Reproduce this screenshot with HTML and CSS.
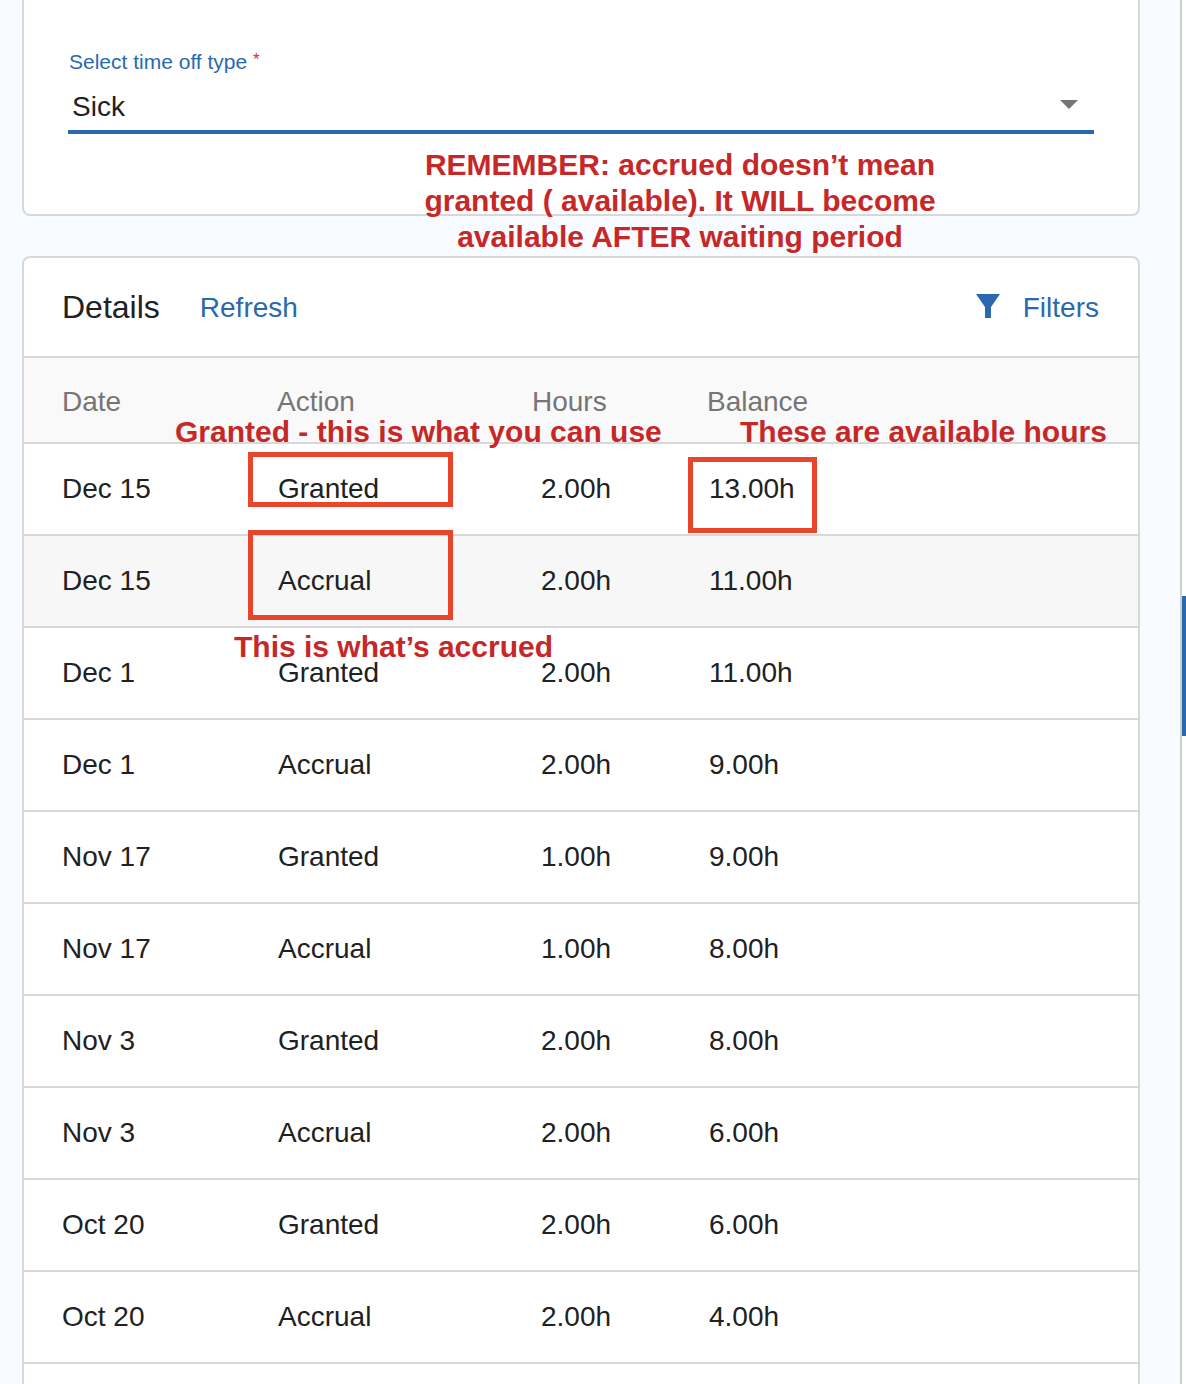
FILE: index.html
```html
<!DOCTYPE html>
<html lang="en">
<head>
    <meta charset="UTF-8">
    <title>Time off details</title>
    <link rel="stylesheet" href="styles.css">
</head>
<body>
    <div class="page">
        <div class="content">
            <div class="card type-card">
                <div class="field-label">Select time off type <span class="required">*</span></div>
                <div class="select">
                    <span>Sick</span>
                    <span class="select-arrow"></span>
                </div>
            </div>

            <div class="card details-card">
                <div class="details-header">
                    <h2 class="details-title">Details</h2>
                    <a class="link">Refresh</a>
                    <a class="link filters">
                        <svg class="filter-icon" width="24" height="24" viewBox="0 0 24 24"><path d="M0 0H24L15 13V24H9V13Z" fill="#2b69ae"/></svg>
                        Filters
                    </a>
                </div>

                <div class="row head">
                    <div>Date</div>
                    <div>Action</div>
                    <div>Hours</div>
                    <div>Balance</div>
                </div>
                <div class="row"><div>Dec 15</div><div class="action">Granted</div><div class="hours">2.00h</div><div class="balance">13.00h</div></div>
                <div class="row shaded"><div>Dec 15</div><div class="action">Accrual</div><div class="hours">2.00h</div><div class="balance">11.00h</div></div>
                <div class="row"><div>Dec 1</div><div class="action">Granted</div><div class="hours">2.00h</div><div class="balance">11.00h</div></div>
                <div class="row"><div>Dec 1</div><div class="action">Accrual</div><div class="hours">2.00h</div><div class="balance">9.00h</div></div>
                <div class="row"><div>Nov 17</div><div class="action">Granted</div><div class="hours">1.00h</div><div class="balance">9.00h</div></div>
                <div class="row"><div>Nov 17</div><div class="action">Accrual</div><div class="hours">1.00h</div><div class="balance">8.00h</div></div>
                <div class="row"><div>Nov 3</div><div class="action">Granted</div><div class="hours">2.00h</div><div class="balance">8.00h</div></div>
                <div class="row"><div>Nov 3</div><div class="action">Accrual</div><div class="hours">2.00h</div><div class="balance">6.00h</div></div>
                <div class="row"><div>Oct 20</div><div class="action">Granted</div><div class="hours">2.00h</div><div class="balance">6.00h</div></div>
                <div class="row"><div>Oct 20</div><div class="action">Accrual</div><div class="hours">2.00h</div><div class="balance">4.00h</div></div>
                <div class="row"></div>
            </div>
        </div>

        <div class="scrollbar"><div class="scrollbar-thumb"></div></div>

        <!-- annotations drawn on top of the screenshot -->
        <div class="note note-remember">REMEMBER: accrued doesn’t mean<br>granted ( available). It WILL become<br>available AFTER waiting period</div>
        <div class="note note-granted">Granted - this is what you can use</div>
        <div class="note note-hours">These are available hours</div>
        <div class="note note-accrued">This is what’s accrued</div>
        <div class="mark mark-granted"></div>
        <div class="mark mark-accrual"></div>
        <div class="mark mark-balance"></div>
    </div>
</body>
</html>
```

FILE: styles.css
```css
* {
    margin: 0;
    padding: 0;
    box-sizing: border-box;
}

body {
    font-family: "Liberation Sans", Arial, sans-serif;
    background: #f8fbff;
    color: #212121;
    overflow: hidden;
}

.page {
    position: relative;
    display: flex;
    height: 1384px;
    overflow: hidden;
}

.content {
    width: 1182px;
    padding: 0 40px 0 22px;
    border-right: 2px solid #cfcfcf;
}

.card {
    background: #fff;
    border: 2px solid #d8d8d8;
    border-radius: 8px;
}

.type-card {
    height: 216px;
    border-top: none;
    border-radius: 0 0 8px 8px;
    padding: 50px 44px 0;
    margin-bottom: 40px;
}

.field-label {
    font-size: 21px;
    line-height: 24px;
    padding-left: 1px;
    color: #2b69ae;
}

.required {
    color: #d9342b;
    font-size: 17px;
    line-height: 0;
    vertical-align: 4px;
}

.select {
    display: flex;
    justify-content: space-between;
    align-items: center;
    height: 60px;
    padding: 10px 16px 0 4px;
    font-size: 28px;
    border-bottom: 4px solid #2b69ae;
}

.select-arrow {
    width: 0;
    height: 0;
    margin-bottom: 5px;
    border-left: 9px solid transparent;
    border-right: 9px solid transparent;
    border-top: 9px solid #757575;
}

.details-header {
    display: flex;
    align-items: center;
    height: 98px;
    padding: 0 39px 0 38px;
}

.details-title {
    font-size: 32px;
    font-weight: normal;
    margin-right: 40px;
}

.link {
    font-size: 28px;
    padding-top: 2px;
    color: #2b69ae;
}

.filters {
    display: flex;
    align-items: center;
    margin-left: auto;
}

.filter-icon {
    margin-right: 23px;
    margin-bottom: 4px;
}

.row {
    display: grid;
    grid-template-columns: 215px 255px 175px 1fr;
    align-items: center;
    height: 92px;
    padding-left: 38px;
    font-size: 28px;
    border-top: 2px solid #d8d8d8;
}

.row.head {
    height: 86px;
    padding-top: 4px;
    background: #f9f9f9;
    color: #757575;
}

.row.shaded {
    background: #f7f7f7;
}

.action {
    padding-left: 1px;
}

.hours {
    padding-left: 9px;
}

.balance {
    padding-left: 2px;
}

.scrollbar {
    position: relative;
    width: 4px;
    background: #fff;
}

.scrollbar-thumb {
    position: absolute;
    top: 596px;
    left: 0;
    width: 4px;
    height: 140px;
    background: #2b69ae;
}

.note {
    position: absolute;
    font-size: 30px;
    font-weight: bold;
    line-height: 36px;
    color: #c62828;
    white-space: nowrap;
}

.note-remember {
    top: 147px;
    left: 360px;
    width: 640px;
    text-align: center;
}

.note-granted {
    top: 414px;
    left: 175px;
}

.note-hours {
    top: 414px;
    left: 740px;
}

.note-accrued {
    top: 629px;
    left: 234px;
}

.mark {
    position: absolute;
    border: 5px solid #e8452a;
}

.mark-granted {
    top: 452px;
    left: 248px;
    width: 205px;
    height: 55px;
}

.mark-accrual {
    top: 530px;
    left: 248px;
    width: 205px;
    height: 90px;
}

.mark-balance {
    top: 457px;
    left: 688px;
    width: 129px;
    height: 76px;
}
```
